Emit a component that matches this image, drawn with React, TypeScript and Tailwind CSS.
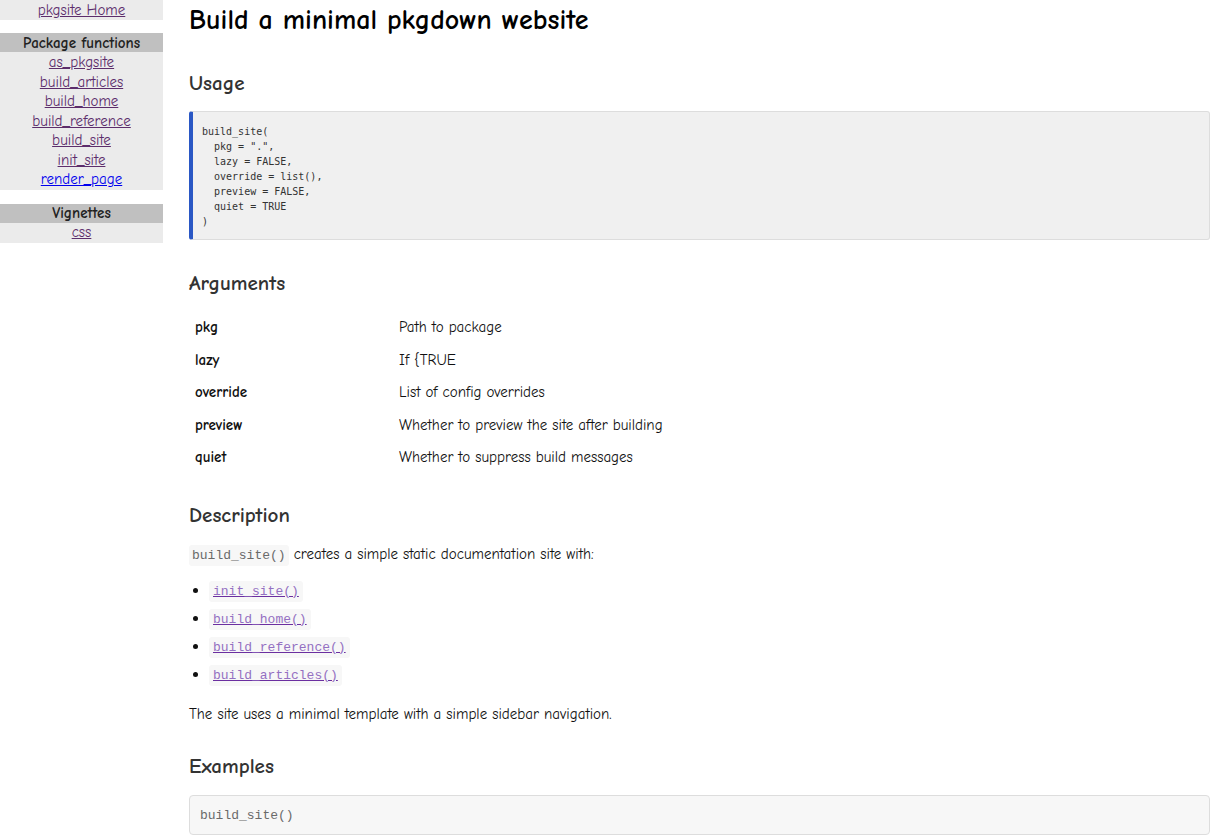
import React from 'react';

const body = { fontFamily: '"Comic Sans MS", "Comic Neue", Lato, sans-serif' };
const mono = { fontFamily: '"DejaVu Sans Mono", monospace' };
const courier = { fontFamily: '"Liberation Mono", "Courier New", monospace' };

const functions = [
  { name: 'as_pkgsite', visited: true },
  { name: 'build_articles', visited: true },
  { name: 'build_home', visited: true },
  { name: 'build_reference', visited: true },
  { name: 'build_site', visited: true },
  { name: 'init_site', visited: true },
  { name: 'render_page', visited: false },
];

const args = [
  ['pkg', 'Path to package'],
  ['lazy', 'If {TRUE'],
  ['override', 'List of config overrides'],
  ['preview', 'Whether to preview the site after building'],
  ['quiet', 'Whether to suppress build messages'],
];

const steps = ['init_site()', 'build_home()', 'build_reference()', 'build_articles()'];

function SideLink({ label, visited = true }: { label: string; visited?: boolean }) {
  return (
    <a
      href="#"
      className={visited ? 'underline text-[#5c2d6b]' : 'underline text-[#0000ee]'}
    >
      {label}
    </a>
  );
}

function Sidebar() {
  return (
    <nav className="w-[163px] shrink-0 text-center text-[15px] leading-[19.5px]">
      <div className="bg-[#ebebeb] h-[20px] pt-[1px]">
        <SideLink label="pkgsite Home" />
      </div>
      <div className="mt-[13px]">
        <div className="bg-[#c0c0c0] text-[#222] font-bold h-[19px] pt-[1px]">Package functions</div>
        <ul className="bg-[#ebebeb] pt-[1px]">
          {functions.map((f) => (
            <li key={f.name}>
              <SideLink label={f.name} visited={f.visited} />
            </li>
          ))}
        </ul>
      </div>
      <div className="mt-[14px]">
        <div className="bg-[#c0c0c0] text-[#222] font-bold h-[19px]">Vignettes</div>
        <div className="bg-[#ebebeb] h-[20px]">
          <SideLink label="css" />
        </div>
      </div>
    </nav>
  );
}

function Heading({ children }: { children: React.ReactNode }) {
  return <h2 className="text-[21px] font-bold text-[#333] leading-[24px]">{children}</h2>;
}

export default function App() {
  return (
    <div className="flex bg-white text-[#111] min-h-[836px]" style={body}>
      <Sidebar />
      <main className="flex-1 pl-[26px] text-[15px] leading-[20px]">
        <h1 className="text-[28px] font-bold text-black leading-[34px] pt-[3px]">
          Build a minimal pkgdown website
        </h1>

        <div className="mt-[34px]">
          <Heading>Usage</Heading>
        </div>
        <pre
          className="mt-[16px] bg-[#f0f0f0] border border-[#dddddd] border-l-4 border-l-[#2a57c4] rounded-[3px] pl-[9px] pt-[12px] pb-[10px] text-[10px] leading-[15px] text-[#333]"
          style={mono}
        >
{`build_site(
  pkg = ".",
  lazy = FALSE,
  override = list(),
  preview = FALSE,
  quiet = TRUE
)`}
        </pre>

        <div className="mt-[31px]">
          <Heading>Arguments</Heading>
        </div>
        <table className="mt-[16px]">
          <tbody>
            {args.map(([k, v]) => (
              <tr key={k} className="h-[32.5px]">
                <td className="w-[210px] px-[6px] font-bold">{k}</td>
                <td>{v}</td>
              </tr>
            ))}
          </tbody>
        </table>

        <div className="mt-[29px]">
          <Heading>Description</Heading>
        </div>
        <p className="mt-[17px]">
          <code
            className="bg-[#f7f7f7] text-[#6a6a6a] text-[13px] px-[3px] py-[3px] rounded-[3px]"
            style={courier}
          >
            build_site()
          </code>{' '}
          creates a simple static documentation site with:
        </p>
        <ul className="mt-[10px] list-disc pl-[20px]">
          {steps.map((s) => (
            <li key={s} className="h-[28px] leading-[28px]">
              <code
                className="bg-[#f7f7f7] px-[4px] py-[3px] rounded-[3px] text-[13px]"
                style={courier}
              >
                <a href="#" className="underline text-[#9470c2] decoration-[#6b2fa0]">
                  {s}
                </a>
              </code>
            </li>
          ))}
        </ul>
        <p className="mt-[16px]">The site uses a minimal template with a simple sidebar navigation.</p>

        <div className="mt-[30px]">
          <Heading>Examples</Heading>
        </div>
        <pre
          className="mt-[17px] bg-[#f7f7f7] border border-[#dddddd] rounded-[4px] px-[10px] pt-[11px] pb-[9px] text-[13px] leading-[18px] text-[#6a6a6a]"
          style={courier}
        >
          build_site()
        </pre>
      </main>
    </div>
  );
}
